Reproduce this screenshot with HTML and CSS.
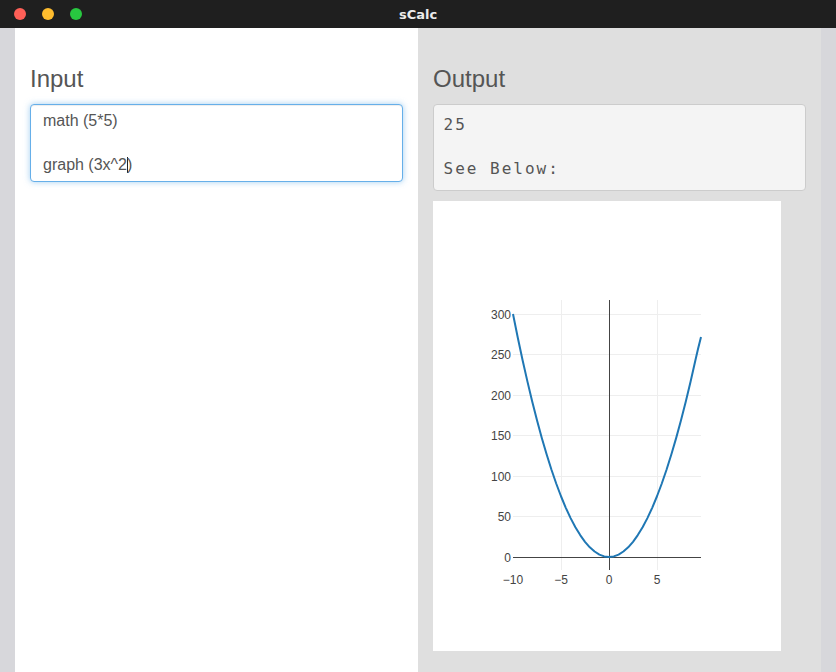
FILE: index.html
```html
<!DOCTYPE html>
<html>
<head>
<meta charset="utf-8">
<title>sCalc</title>
<link rel="stylesheet" href="styles.css">
</head>
<body>
<div class="window">
  <header class="titlebar">
    <div class="lights">
      <span class="light red"></span>
      <span class="light yellow"></span>
      <span class="light green"></span>
    </div>
    <div class="title">sCalc</div>
    <div></div>
  </header>
  <main class="main">
    <section class="pane pane-input">
      <h3 class="heading">Input</h3>
      <div class="input">
        <div class="line">math (5*5)</div>
        <div class="line"></div>
        <div class="line">graph (3x^2<span class="caret"></span>)</div>
      </div>
    </section>
    <section class="pane pane-output">
      <h3 class="heading">Output</h3>
      <pre class="output">25

See Below:</pre>
      <div class="chart">
        <svg class="plot" width="348" height="450" viewBox="0 0 348 450">
          <g class="grid">
            <line x1="80" y1="113.5" x2="268" y2="113.5"/>
            <line x1="80" y1="153.5" x2="268" y2="153.5"/>
            <line x1="80" y1="194.5" x2="268" y2="194.5"/>
            <line x1="80" y1="234.5" x2="268" y2="234.5"/>
            <line x1="80" y1="275.5" x2="268" y2="275.5"/>
            <line x1="80" y1="315.5" x2="268" y2="315.5"/>
            <line x1="128.5" y1="99" x2="128.5" y2="369"/>
            <line x1="224.5" y1="99" x2="224.5" y2="369"/>
          </g>
          <g class="zero">
            <line x1="80" y1="356.5" x2="268" y2="356.5"/>
            <line x1="176.5" y1="99" x2="176.5" y2="369"/>
          </g>
          <path class="curve" d="M80,113 L84.8,136.7 L89.6,159.2 L94.4,180.4 L99.2,200.5 L104,219.3 L108.8,236.9 L113.6,253.3 L118.4,268.5 L123.2,282.5 L128,295.25 L132.8,306.8 L137.6,317.1 L142.4,326.2 L147.2,334.1 L152,340.8 L156.8,346.3 L161.6,350.5 L166.4,353.6 L171.2,355.4 L176,356 L180.8,355.4 L185.6,353.6 L190.4,350.5 L195.2,346.3 L200,340.8 L204.8,334.1 L209.6,326.2 L214.4,317.1 L219.2,306.8 L224,295.25 L228.8,282.5 L233.6,268.5 L238.4,253.3 L243.2,236.9 L248,219.3 L252.8,200.5 L257.6,180.4 L262.4,159.2 L265,148 L268,136"/>
          <g class="ylabels">
            <text x="78" y="117.5">300</text>
            <text x="78" y="158">250</text>
            <text x="78" y="198.5">200</text>
            <text x="78" y="239">150</text>
            <text x="78" y="279.5">100</text>
            <text x="78" y="320">50</text>
            <text x="78" y="360.5">0</text>
          </g>
          <g class="xlabels">
            <text x="80" y="383">−10</text>
            <text x="128" y="383">−5</text>
            <text x="176" y="383">0</text>
            <text x="224" y="383">5</text>
          </g>
        </svg>
      </div>
    </section>
  </main>
</div>
</body>
</html>
```
FILE: styles.css
```css
html, body {
  margin: 0;
  padding: 0;
}
body {
  width: 836px;
  height: 672px;
  overflow: hidden;
  font-family: "Liberation Sans", Arial, sans-serif;
}
.window {
  display: flex;
  flex-direction: column;
  height: 672px;
}
.titlebar {
  height: 28px;
  flex: none;
  background: #1f1f1f;
  display: grid;
  grid-template-columns: 1fr auto 1fr;
  align-items: center;
}
.lights {
  display: flex;
  gap: 16px;
  padding-left: 14px;
}
.light {
  width: 12px;
  height: 12px;
  border-radius: 50%;
}
.red { background: #fe5f57; }
.yellow { background: #febc2e; }
.green { background: #28c840; }
.title {
  font-family: "DejaVu Sans", sans-serif;
  font-weight: bold;
  font-size: 13px;
  color: #ececec;
}
.main {
  flex: 1;
  display: flex;
  padding: 0 15px;
  background: #d7d7db;
  min-height: 0;
}
.pane {
  width: 403px;
  box-sizing: border-box;
  padding: 38px 15px 0;
}
.pane-input { background: #ffffff; }
.pane-output { background: #dfdfdf; }
.heading {
  margin: 0 0 12px;
  font-size: 24px;
  line-height: 26px;
  font-weight: normal;
  color: #555555;
}
.input {
  box-sizing: border-box;
  height: 78px;
  border: 1px solid #66afe9;
  border-radius: 4px;
  padding: 5px 12px 4px;
  background: #fff;
  box-shadow: inset 0 1px 1px rgba(0,0,0,.075), 0 0 6px rgba(102,175,233,.6);
  font-size: 16px;
  line-height: 22px;
  color: #555555;
}
.line {
  height: 22px;
  white-space: pre;
}
.caret {
  display: inline-block;
  width: 1px;
  height: 16px;
  margin-right: -1px;
  background: #222;
  vertical-align: -3px;
}
.output {
  margin: 0 0 10px;
  box-sizing: border-box;
  height: 87px;
  padding: 8.5px 9.5px 10.5px;
  border: 1px solid #cccccc;
  border-radius: 4px;
  background: #f4f4f4;
  font-family: "DejaVu Sans Mono", monospace;
  font-size: 16px;
  line-height: 22px;
  letter-spacing: 2px;
  color: #555555;
}
.chart {
  width: 348px;
  height: 450px;
  background: #ffffff;
}
.plot {
  display: block;
}
.grid line {
  stroke: #eeeeee;
  stroke-width: 1;
}
.zero line {
  stroke: #444444;
  stroke-width: 1;
}
.curve {
  fill: none;
  stroke: #1f77b4;
  stroke-width: 2;
  stroke-linejoin: round;
}
.ylabels text, .xlabels text {
  font-family: "Liberation Sans", Arial, sans-serif;
  font-size: 12px;
  fill: #444444;
}
.ylabels text { text-anchor: end; }
.xlabels text { text-anchor: middle; }
```
